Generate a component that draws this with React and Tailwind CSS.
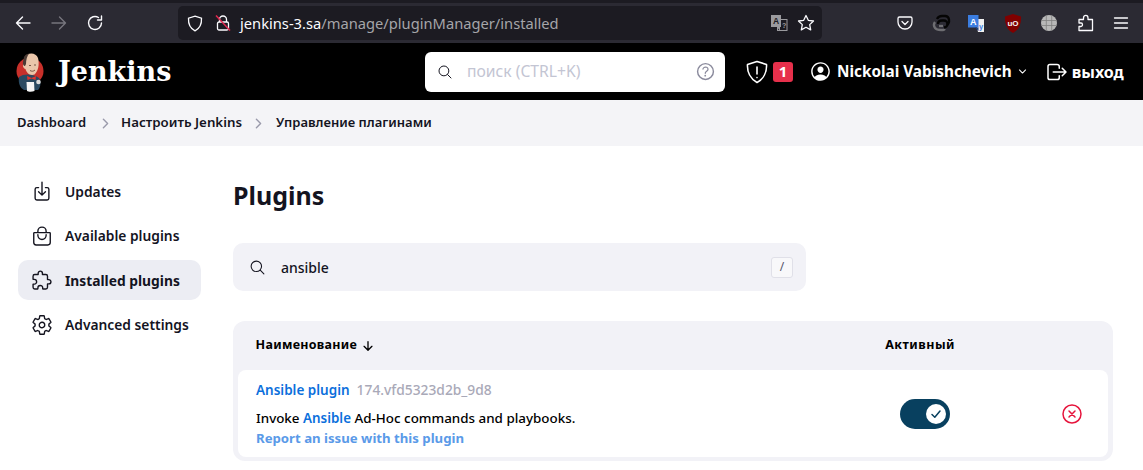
import {
    IoArrowDown,
    IoBagHandleOutline,
    IoChevronDown,
    IoChevronForward,
    IoCloseCircleOutline,
    IoDownloadOutline,
    IoExtensionPuzzleOutline,
    IoHelpCircleOutline,
    IoLogOutOutline,
    IoPersonCircleOutline,
    IoSearchOutline,
    IoSettingsOutline,
} from 'react-icons/io5';

const sans = 'font-["Noto_Sans",sans-serif]';

const JenkinsLogo = () => (
    <svg width="28" height="40" viewBox="0 0 28 40" className="shrink-0">
        <circle cx="14" cy="19" r="13.5" fill="#c8302a" />
        <path d="M3 25 C2 31 4 36 8 38 L22 38 C25 35 25 29 23 26 C18 22 8 21 3 25Z" fill="#2a4a62" />
        <path d="M8 6 C11 0 20 0 22 6 C23.500 12 22.500 19 18.500 22.500 C14 24 10.500 21 9.500 17 C7 16.500 6 12.500 8 11.500 Z" fill="#eac6aa" />
        <path d="M8 5 C9 3 11 1.800 13 1.500 C11 4 10 8 10 12 L9 14 C7.500 14 6.500 12 7 10 Z" fill="#4a3a34" />
        <path d="M13 13.500h2M18 13h2M14 18.500c1.500 1 3.500 1 5-.5" stroke="#5b3a2c" strokeWidth="0.8" fill="none" />
        <path d="M11 24 L15.500 26 L20 24 L19.500 28 L15.500 26.500 L11.500 28Z" fill="#e0322c" />
        <path d="M10.500 30 L18 30 L18.500 39 C16 40 12.500 40 11 39Z" fill="#f5f5f5" />
        <circle cx="22.500" cy="30" r="2.300" fill="#dcdcdc" />
    </svg>
);

// firefox toolbar
const Toolbar = () => (
    <div className="bg-[#2b2a33] border-t-[3px] border-[#1c1b22] h-[43px] flex items-center text-[#fbfbfe] shrink-0">
        <div className="w-[178px] flex items-center shrink-0">
            <svg width="16" height="16" viewBox="0 0 16 16" fill="none" stroke="currentColor" strokeWidth="1.4" strokeLinecap="round" strokeLinejoin="round" className="ml-[15px]"><path d="M15 8H1.5M7.5 2 1.5 8l6 6" /></svg>
            <svg width="16" height="16" viewBox="0 0 16 16" fill="none" stroke="#77767e" strokeWidth="1.4" strokeLinecap="round" strokeLinejoin="round" className="ml-[20px]"><path d="M1 8h13.5M8.5 2l6 6-6 6" /></svg>
            <svg width="16" height="16" viewBox="0 0 16 16" fill="none" stroke="currentColor" strokeWidth="1.4" strokeLinecap="round" strokeLinejoin="round" className="ml-[20px]"><path d="M14.5 8A6.5 6.5 0 1 1 11.5 2.5M14.5 1v4h-4" /></svg>
        </div>
        <div className="w-[644px] h-[34px] bg-[#1c1b22] rounded-[5px] flex items-center shrink-0">
            <svg width="16" height="17" viewBox="0 0 16 17" fill="none" stroke="currentColor" strokeWidth="1.3" className="ml-[9px]"><path d="M8 1.2 14.5 3.2C14.8 9 12.5 13.5 8 15.8 3.5 13.5 1.2 9 1.5 3.2Z" /></svg>
            <svg width="16" height="18" viewBox="0 0 16 18" fill="none" className="ml-[12px]">
                <path d="M4.5 8V5.5a3.5 3.5 0 0 1 7 0V8" stroke="#fbfbfe" strokeWidth="1.3" />
                <rect x="2.5" y="8" width="11" height="8" rx="1.5" stroke="#fbfbfe" strokeWidth="1.3" />
                <path d="M1 1.5 15 16.5" stroke="#e22850" strokeWidth="1.5" />
            </svg>
            <span className={`${sans} text-[14.700px] ml-[9px] text-[#fbfbfe]`}>jenkins-3.sa<span className="text-[#a5a5a9]">/manage/pluginManager/installed</span></span>
            <svg width="18" height="18" viewBox="0 0 18 18" className="ml-auto">
                <rect x="7.500" y="5.500" width="9.500" height="11" fill="#1c1b22" stroke="#9a9a9e" strokeWidth="1" />
                <rect x="1" y="1" width="10" height="12" fill="#9a9a9e" />
                <path d="M7 13 10 17V13Z" fill="#9a9a9e" />
                <text x="3" y="10" fontSize="8.500" fontWeight="700" fill="#1c1b22" fontFamily="Liberation Sans">A</text>
                <text x="12" y="14" fontSize="7" fontWeight="700" fill="#9a9a9e" fontFamily="Liberation Sans">?</text>
            </svg>
            <svg width="18" height="18" viewBox="0 0 18 18" fill="none" stroke="currentColor" strokeWidth="1.3" strokeLinejoin="round" className="ml-[9px] mr-[7px]"><path d="M9 1.5 11.3 6.3 16.5 7 12.7 10.6 13.7 15.9 9 13.3 4.3 15.9 5.3 10.6 1.5 7 6.7 6.3Z" /></svg>
        </div>
        <div className="flex-1 flex items-center">
            <svg width="16" height="16" viewBox="0 0 16 16" fill="none" stroke="currentColor" strokeWidth="1.3" strokeLinecap="round" strokeLinejoin="round" className="ml-[75px]"><path d="M2.5 2h11A1.5 1.5 0 0 1 15 3.5V7A7 7 0 0 1 1 7V3.5A1.5 1.5 0 0 1 2.5 2Z" /><path d="M5 6.5 8 9.5l3-3" /></svg>
            <svg width="20" height="18" viewBox="0 0 20 18" fill="none" strokeWidth="2.300" className="ml-[18px]">
                <path d="M4 8a5 5 0 0 0 0 6c1.500 2 4 2 6 2h2a3 3 0 0 0 2-1" stroke="#6e6e72" />
                <path d="M8 12h4" stroke="#6e6e72" />
                <path d="M7 10c0-2.500 2-3.500 4-3.500h2a3 3 0 0 1 0 7" stroke="#050505" />
                <path d="M6 5c1-2 3-3 5-3h3c5 0 5 7 2 9" stroke="#050505" />
            </svg>
            <svg width="18" height="19" viewBox="0 0 18 19" className="ml-[16px]">
                <path d="M8 5h9v13H11Z" fill="#f1f1f1" />
                <rect x="1" y="1" width="10.500" height="12.500" fill="#3b7de0" />
                <path d="M8 13.500h3.500V17Z" fill="#1c3f80" />
                <text x="3" y="10.500" fontSize="9" fontWeight="700" fill="#fff" fontFamily="Liberation Sans">A</text>
                <text x="12" y="15" fontSize="7.500" fontWeight="700" fill="#3b7de0" fontFamily="Liberation Sans">y</text>
            </svg>
            <svg width="20" height="21" viewBox="0 0 20 21" className="ml-[18px]">
                <path d="M10 1 18 3.500C18.300 11 16 17 10 20 4 17 1.700 11 2 3.500Z" fill="#800000" />
                <text x="10" y="13" fontSize="8" fontWeight="700" textAnchor="middle" fill="#f4f4f4" fontFamily="Liberation Sans">uO</text>
            </svg>
            <svg width="18" height="18" viewBox="0 0 18 18" className="ml-[17px]">
                <circle cx="9" cy="9" r="8" fill="#b8b8b8" />
                <path d="M1 6.5h16M1 11.5h16M6.3 1v16M11.7 1v16" stroke="#808080" strokeWidth="0.8" fill="none" />
            </svg>
            <svg width="18" height="18" viewBox="0 0 18 18" fill="none" stroke="currentColor" strokeWidth="1.3" strokeLinejoin="round" className="ml-[19px]"><path d="M2 16.5V12.5H4C6 12.5 6 9 4 9H2V5.5H6.5V4C6.5 0.5 11 0.5 11 4V5.5H15.5V16.5Z" /></svg>
            <svg width="16" height="14" viewBox="0 0 16 14" fill="none" stroke="currentColor" strokeWidth="1.3" strokeLinecap="round" className="ml-[18px]"><path d="M1.5 2h13M1.5 7h13M1.5 12h13" /></svg>
        </div>
    </div>
);

const Header = () => (
    <header className={`${sans} bg-black h-[57px] flex items-center text-white shrink-0`}>
        <div className="w-[425px] flex items-center shrink-0 pl-[16px]">
            <JenkinsLogo />
            <span className='ml-[14px] font-["DejaVu_Serif",serif] font-bold text-[27px] leading-none'>Jenkins</span>
        </div>
        <div className="w-[300px] h-[40px] bg-white rounded-[6px] flex items-center shrink-0">
            <IoSearchOutline size={16} className="ml-[12px] text-[#14141f]" />
            <span className="ml-[14px] text-[15.700px] text-[#c3c5d3]">поиск (CTRL+K)</span>
            <IoHelpCircleOutline size={23} className="ml-auto mr-[8px] text-[#8a8a9c]" />
        </div>
        <svg width="22" height="24" viewBox="0 0 22 24" fill="none" stroke="currentColor" strokeWidth="1.6" strokeLinecap="round" strokeLinejoin="round" className="ml-[21px]">
            <path d="M11 1.5 20.5 4.5C21 12 17.5 19 11 22.5 4.500 19 1 12 1.500 4.500Z" />
            <path d="M11 7v7M11 17.500v0.100" />
        </svg>
        <span className="ml-[5px] w-[20px] h-[20px] rounded-[3px] bg-[#e6304b] flex items-center justify-center text-[15px] font-bold leading-none">1</span>
        <IoPersonCircleOutline size={23} className="ml-[16px]" />
        <span className="ml-[5px] text-[15.300px] font-bold">Nickolai Vabishchevich</span>
        <IoChevronDown size={11} className="ml-[5px]" />
        <IoLogOutOutline size={24} className="ml-[17px]" />
        <span className="ml-[3px] text-[16px] font-bold">выход</span>
    </header>
);

const Breadcrumb = () => (
    <nav className={`${sans} bg-[#f4f4f7] h-[46px] flex items-center pl-[17px] text-[13px] font-semibold text-[#14141f] shrink-0`}>
        <span>Dashboard</span>
        <IoChevronForward size={15} className="text-[#9a9aab] ml-[12px] mr-[8px]" />
        <span className="text-[13.300px]">Настроить Jenkins</span>
        <IoChevronForward size={15} className="text-[#9a9aab] ml-[9px] mr-[10px]" />
        <span>Управление плагинами</span>
    </nav>
);

const items = [
    { label: 'Updates', Icon: IoDownloadOutline },
    { label: 'Available plugins', Icon: IoBagHandleOutline },
    { label: 'Installed plugins', Icon: IoExtensionPuzzleOutline, active: true },
    { label: 'Advanced settings', Icon: IoSettingsOutline },
];

const Sidebar = () => (
    <aside className="w-[183px] shrink-0 flex flex-col gap-[4.500px] pt-[25px]">
        {items.map(({ label, Icon, active }) => (
            <div key={label} className={`h-[40px] rounded-[10px] flex items-center pl-[13px] text-[13.800px] text-[#14141f] ${active ? 'bg-[#ecedf3] font-bold' : 'font-semibold'}`}>
                <Icon size={22} />
                <span className="ml-[12px] mt-[2px]">{label}</span>
            </div>
        ))}
    </aside>
);

const Main = () => (
    <main className="ml-[32px] w-[880px] shrink-0">
        <h1 className="text-[25px] font-bold text-[#14141f] leading-none mt-[37px]">Plugins</h1>
        <div className="mt-[35px] w-[573px] h-[48px] rounded-[10px] bg-[#f2f2f7] flex items-center">
            <IoSearchOutline size={17} className="ml-[16px] text-[#14141f]" />
            <span className="ml-[15px] text-[14px] font-medium text-[#14141f]">ansible</span>
            <span className="ml-auto mr-[13px] w-[22px] h-[21px] rounded-[3px] border border-[#e0e0e8] bg-[#f8f8fa] flex items-center justify-center text-[12px] text-[#55556a]">/</span>
        </div>
        <section className="mt-[30px] rounded-[12px] bg-[#f2f2f7] px-[5px] pb-[4px]">
            <div className="h-[49px] flex items-center text-[12.500px] font-bold text-black">
                <span className="ml-[17.500px] flex items-center tracking-[0.3px]">Наименование<IoArrowDown size={14} className="ml-[4px]" /></span>
                <span className="ml-auto mr-[153px] tracking-[0.5px]">Активный</span>
            </div>
            <div className="h-[87px] rounded-[8px] bg-white flex items-center">
                <div className="ml-[18px] flex-1 leading-none pt-[2px]">
                    <div className="flex items-baseline text-[13.500px] font-semibold">
                        <span className="text-[#0b6fdc]">Ansible plugin</span>
                        <span className="ml-[7px] text-[13.800px] text-[#a9a9b8] font-medium">174.vfd5323d2b_9d8</span>
                    </div>
                    <p className="mt-[14px] text-[13.400px] font-medium text-black">Invoke <span className="text-[#0b6fdc] font-semibold">Ansible</span> Ad-Hoc commands and playbooks.</p>
                    <p className="mt-[7px] text-[13.200px] font-bold text-[#5a9ae8]">Report an issue with this plugin</p>
                </div>
                <div className="w-[50px] h-[30px] rounded-full bg-[#08405f] flex items-center justify-end pr-[4px] mr-[110px]">
                    <div className="w-[20px] h-[20px] rounded-full bg-white flex items-center justify-center">
                        <svg width="12" height="12" viewBox="0 0 12 12" fill="none" stroke="#08405f" strokeWidth="1.500" strokeLinecap="round" strokeLinejoin="round"><path d="M2 6.500 4.800 9.200 10 3" /></svg>
                    </div>
                </div>
                <IoCloseCircleOutline size={24} className="mr-[24px] text-[#e6143c]" />
            </div>
        </section>
    </main>
);

export default function App() {
    return (
        <div className={`${sans} w-[1143px] h-[470px] overflow-hidden bg-white flex flex-col`}>
            <Toolbar />
            <Header />
            <Breadcrumb />
            <div className="flex pl-[18px]">
                <Sidebar />
                <Main />
            </div>
        </div>
    );
}
